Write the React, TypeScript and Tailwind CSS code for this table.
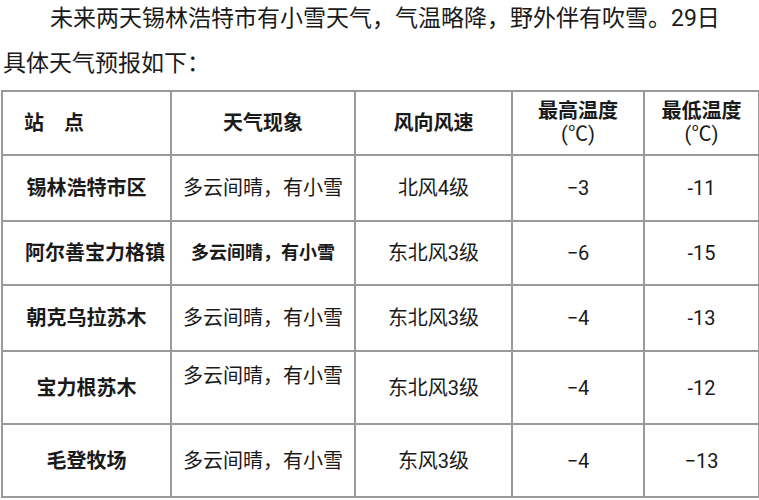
const rows = [
  { site: "锡林浩特市区", wx: "多云间晴，有小雪", wind: "北风4级", hi: "−3", lo: "-11", h: "h-[66px]", wxStyle: "text-[20px]", top: false, siteStyle: "" },
  { site: "阿尔善宝力格镇", wx: "多云间晴，有小雪", wind: "东北风3级", hi: "−6", lo: "-15", h: "h-[64px]", wxStyle: "text-[18px] font-bold", top: false, siteStyle: "!text-left pl-[22px]" },
  { site: "朝克乌拉苏木", wx: "多云间晴，有小雪", wind: "东北风3级", hi: "−4", lo: "-13", h: "h-[66px]", wxStyle: "text-[20px]", top: false, siteStyle: "" },
  { site: "宝力根苏木", wx: "多云间晴，有小雪", wind: "东北风3级", hi: "−4", lo: "-12", h: "h-[73px]", wxStyle: "text-[20px]", top: true, siteStyle: "" },
  { site: "毛登牧场", wx: "多云间晴，有小雪", wind: "东风3级", hi: "−4", lo: "−13", h: "h-[73px]", wxStyle: "text-[20px]", top: false, siteStyle: "" },
];

const cell = "border-2 border-[#9a9a9a] p-0 text-center";

export default function App() {
  return (
    <div
      className="w-[759px] h-[500px] overflow-hidden bg-white text-[#1a1a1a]"
      style={{ fontFamily: '"Roboto", "Noto Sans CJK SC", sans-serif' }}
    >
      <p className="mt-[-4px] pl-[3px] text-[23px] leading-[45px] indent-[47px]">
        未来两天锡林浩特市有小雪天气，气温略降，野外伴有吹雪。29日
        <br />
        具体天气预报如下：
      </p>

      <table className="mt-[4px] ml-[1px] w-[757px] table-fixed border-collapse">
        <colgroup>
          <col className="w-[169px]" />
          <col className="w-[184px]" />
          <col className="w-[157px]" />
          <col className="w-[132px]" />
          <col className="w-[115px]" />
        </colgroup>
        <thead>
          <tr className="h-[64px] text-[20px] font-bold leading-[23px]">
            <th className={`${cell} !text-left pl-[21px]`}>站　点</th>
            <th className={cell}>天气现象</th>
            <th className={cell}>风向风速</th>
            <th className={cell}>
              最高温度
              <br />
              <span className="font-normal">(℃)</span>
            </th>
            <th className={cell}>
              最低温度
              <br />
              <span className="font-normal">(℃)</span>
            </th>
          </tr>
        </thead>
        <tbody>
          {rows.map((r) => (
            <tr key={r.site} className={`${r.h} text-[20px] leading-[30px]`}>
              <td className={`${cell} font-bold whitespace-nowrap overflow-visible ${r.siteStyle}`}>{r.site}</td>
              <td className={`${cell} ${r.wxStyle} ${r.top ? "align-top pt-[9px]" : ""}`}>{r.wx}</td>
              <td className={cell}>{r.wind}</td>
              <td className={cell}>{r.hi}</td>
              <td className={cell}>{r.lo}</td>
            </tr>
          ))}
        </tbody>
      </table>
    </div>
  );
}
